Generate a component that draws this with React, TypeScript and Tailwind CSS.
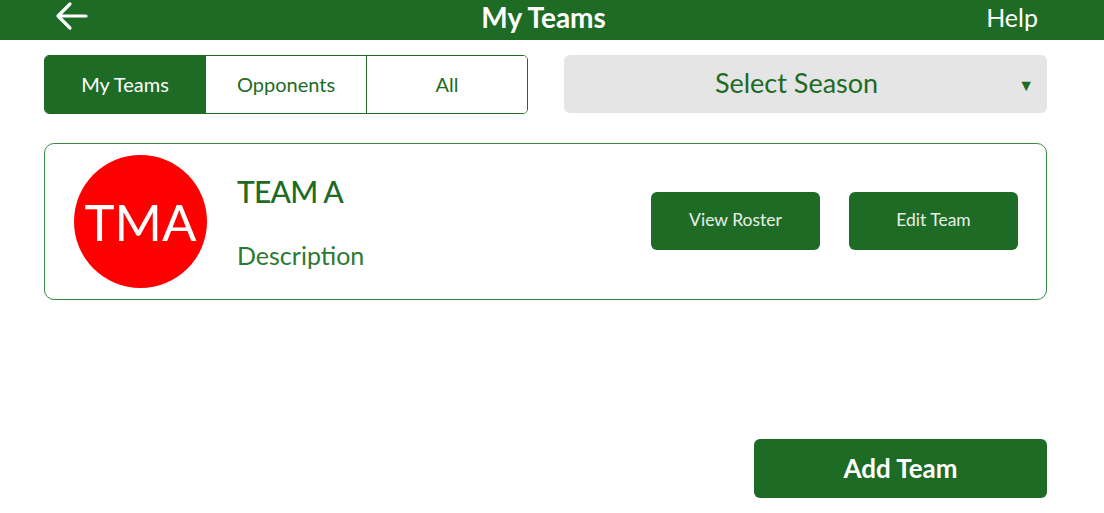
import { useState } from "react";

const tabs = ["My Teams", "Opponents", "All"];

export default function App() {
  const [active, setActive] = useState("My Teams");

  return (
    <div className="w-[1104px] h-[513px] bg-white overflow-hidden font-['Lato','Noto_Sans',sans-serif] text-[#1e6b25]">
      {/* Top bar */}
      <header className="h-10 bg-[#1e6b25] flex items-start pl-[55px] pr-[66px] text-white">
        <svg width="34" height="30" viewBox="0 0 34 30" fill="none" stroke="white" strokeWidth="3.2" strokeLinecap="round" strokeLinejoin="round" className="mt-[1px]">
          <path d="M31 15H3M15 3L3 15l12 12" />
        </svg>
        <h1 className="flex-1 text-center text-[28px] font-bold leading-[34px] pl-3">My Teams</h1>
        <button className="text-[25px] leading-[30px] mt-[2px]">Help</button>
      </header>

      <div className="pl-[44px] pr-[57px] pt-[15px]">
        {/* Filters */}
        <div className="flex gap-9">
          <div className="flex w-[484px] h-[59px] border border-[#1e6b25] rounded-[5px] overflow-hidden">
            {tabs.map((t, i) => (
              <button
                key={t}
                onClick={() => setActive(t)}
                className={`flex-1 text-[20px] -mt-px ${i > 0 ? "border-l border-[#1e6b25]" : ""} ${
                  active === t ? "bg-[#1e6b25] text-white" : "bg-white text-[#1e6b25]"
                }`}
              >
                {t}
              </button>
            ))}
          </div>
          <button className="flex-1 h-[58px] bg-[#e5e5e5] rounded-md flex items-center relative">
            <span className="flex-1 text-center text-[27px] pr-[18px] -mt-px">Select Season</span>
            <span className="absolute right-[13px] top-[18px] text-[16px]">▼</span>
          </button>
        </div>

        {/* Team card */}
        <div className="mt-[29px] h-[157px] border-[1.5px] border-[#3c8a43] rounded-[10px] flex items-center pl-[29px] pr-[28px]">
          <div className="w-[133px] h-[133px] rounded-full bg-[#fe0000] flex items-center justify-center text-white text-[51px] leading-none">
            TMA
          </div>
          <div className="flex-1 pl-[30px] flex flex-col gap-[37px]">
            <div className="text-[30px] font-medium leading-none tracking-tight">TEAM A</div>
            <div className="text-[25px] leading-none text-[#2a7a31]">Description</div>
          </div>
          <div className="flex gap-[29px] -mt-[2px]">
            <button className="w-[169px] h-[58px] bg-[#1e6b25] rounded-md text-white/90 text-[17.5px]">View Roster</button>
            <button className="w-[169px] h-[58px] bg-[#1e6b25] rounded-md text-white/90 text-[17.5px]">Edit Team</button>
          </div>
        </div>

        {/* Add */}
        <div className="flex justify-end mt-[139px]">
          <button className="w-[293px] h-[59px] bg-[#1e6b25] rounded-md text-white text-[26px] font-bold">Add Team</button>
        </div>
      </div>
    </div>
  );
}
